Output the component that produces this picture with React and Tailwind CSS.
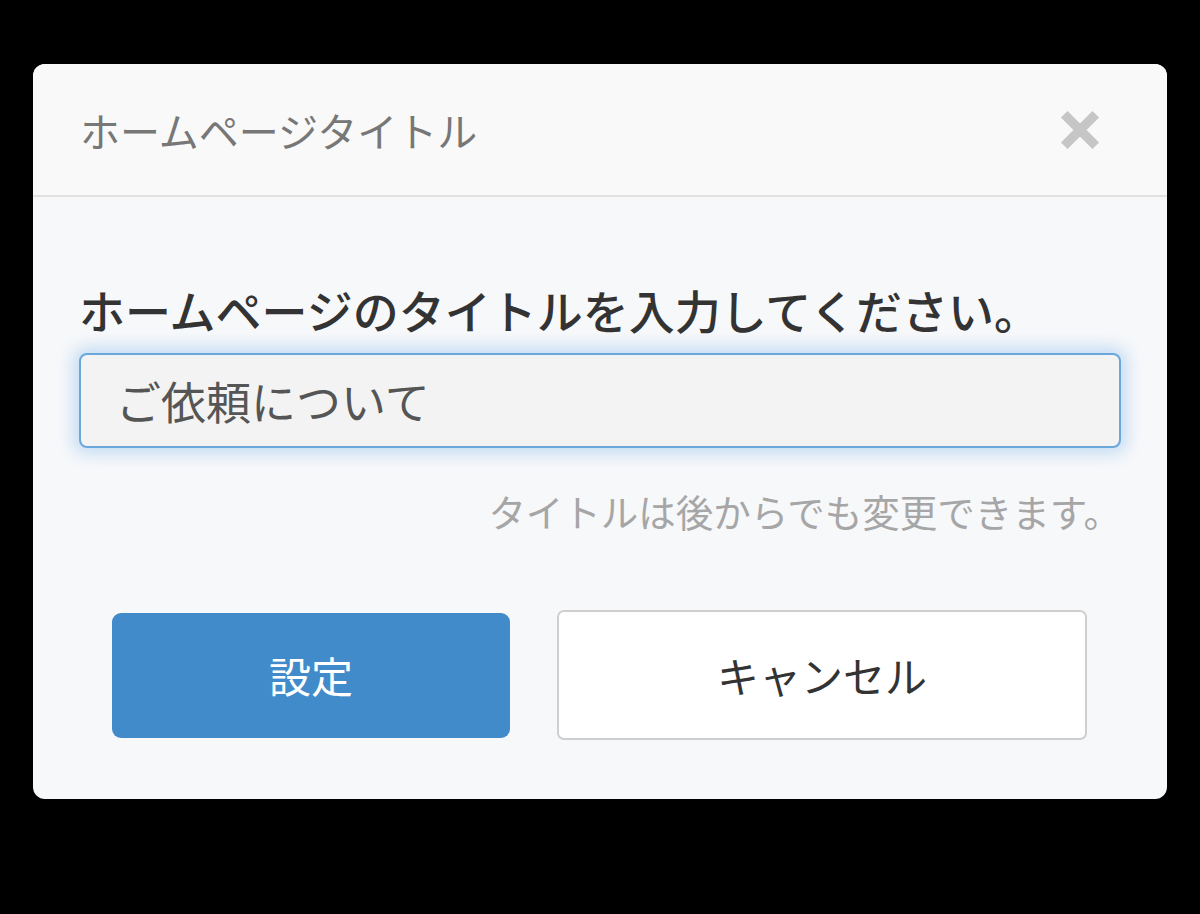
const jp = { fontFamily: '"Noto Sans CJK JP", "Noto Sans", sans-serif' };

function CloseIcon() {
    return (
        <svg className="w-[42px] h-[42px] text-[#c6c6c6]" viewBox="0 0 40 40" fill="none" stroke="currentColor" strokeWidth={9} strokeLinecap="butt">
            <path d="M5 5L35 35M35 5L5 35" />
        </svg>
    );
}

export default function App() {
    return (
        <div className="min-h-[914px] w-[1200px] bg-black pt-[64px] pl-[33px]" style={jp}>
            <div className="w-[1134px] rounded-[12px] overflow-hidden bg-[#f7f8fa]">
                {/* Header */}
                <div className="h-[133px] flex items-center justify-between pl-[47px] pr-[66px] bg-[#f9f9f9] border-b-2 border-[#e2e2e2]">
                    <h1 className="text-[40px] leading-none text-[#777777]">ホームページタイトル</h1>
                    <button className="flex items-center justify-center">
                        <CloseIcon />
                    </button>
                </div>

                {/* Body */}
                <div className="pt-[84px] pl-[46px] pr-[46px] pb-[59px]">
                    <label className="block text-[46px] leading-[56px] font-medium text-[#333333]">
                        ホームページのタイトルを入力してください。
                    </label>
                    <div className="mt-[16px] h-[95px] rounded-[8px] border-2 border-[#6aa8dc] bg-[#f3f3f3] shadow-[0_0_16px_6px_rgba(120,180,235,0.4)] flex items-center pl-[35px]">
                        <span className="text-[45px] leading-none text-[#555555]">ご依頼について</span>
                    </div>
                    <p className="mt-[41px] text-right text-[37.5px] leading-[44px] text-[#a6a6a6]">
                        タイトルは後からでも変更できます。
                    </p>
                    <div className="mt-[77px] flex items-center pl-[33px] gap-[47px]">
                        <button className="w-[398px] h-[125px] rounded-[9px] bg-[#428bca] text-white text-[42px] leading-none">
                            設定
                        </button>
                        <button className="w-[530px] h-[130px] rounded-[7px] bg-white border-2 border-[#cfcfcf] text-[#333333] text-[42px] leading-none">
                            キャンセル
                        </button>
                    </div>
                </div>
            </div>
        </div>
    );
}
